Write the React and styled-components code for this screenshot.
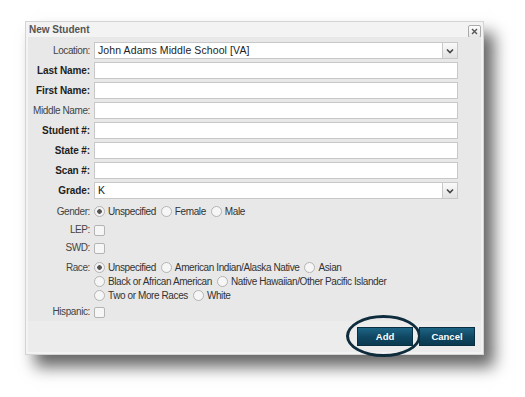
import React from "react";
import styled, { createGlobalStyle } from "styled-components";

const GlobalStyle = createGlobalStyle`
  html, body {
    margin: 0;
    padding: 0;
    background: #ffffff;
  }
  body {
    font-family: "Liberation Sans", Arial, sans-serif;
  }
`;

const Page = styled.div`
  width: 525px;
  height: 397px;
  padding: 21px 0 0 25px;
  box-sizing: border-box;
  overflow: hidden;
`;

const Dialog = styled.div`
  position: relative;
  width: 459px;
  height: 334px;
  box-sizing: border-box;
  background: #f3f3f3;
  border: 1px solid #d4d4d4;
  box-shadow: 10px 12px 15px rgba(0, 0, 0, 0.6);
  display: flex;
  flex-direction: column;
`;

const TitleBar = styled.div`
  height: 15px;
  display: flex;
  align-items: center;
  justify-content: space-between;
  padding: 0 2px 0 3px;
  font-size: 10px;
  font-weight: bold;
  color: #555;
`;

const CloseButton = styled.div`
  width: 11px;
  height: 11px;
  margin-top: 3px;
  border: 1px solid #aaa;
  border-radius: 2px;
  background: linear-gradient(#fdfdfd, #e6e6e6);
  display: flex;
  align-items: center;
  justify-content: center;
`;

const Body = styled.div`
  flex: 1;
  margin: 0 2px 2px 2px;
  background: #e8e8e8;
  display: flex;
  flex-direction: column;
`;

const Form = styled.div`
  flex: 1;
  padding: 5px 23px 0 0;
  display: grid;
  grid-template-columns: 62px 1fr;
  column-gap: 4px;
  align-content: start;
`;

const Label = styled.div`
  text-align: right;
  font-size: 10px;
  letter-spacing: ${(p) => (p.$bold ? "-0.1px" : "-0.4px")};
  color: ${(p) => (p.$bold ? "#1e1e1e" : "#444")};
  font-weight: ${(p) => (p.$bold ? "bold" : "normal")};
  height: ${(p) => p.$h || 20}px;
  line-height: ${(p) => p.$lh || 17}px;
  white-space: nowrap;
`;

const Field = styled.div`
  height: ${(p) => p.$h || 20}px;
`;

const TextInput = styled.div`
  height: 17px;
  box-sizing: border-box;
  border: 1px solid #c8c8c8;
  background: #fff;
  font-size: 10.5px;
  letter-spacing: 0.1px;
  color: #222;
  line-height: 15px;
  padding-left: 3px;
  display: flex;
  align-items: center;
  justify-content: space-between;
`;

const SelectArrow = styled.div`
  width: 14px;
  height: 15px;
  border-left: 1px solid #c8c8c8;
  background: linear-gradient(#fafafa, #e2e2e2);
  display: flex;
  align-items: center;
  justify-content: center;
`;

const Options = styled.div`
  display: flex;
  align-items: center;
  font-size: 10px;
  letter-spacing: -0.4px;
  color: #333;
  height: ${(p) => p.$lh || 17}px;
`;

const Option = styled.span`
  display: inline-flex;
  align-items: center;
  margin-right: 5px;
  white-space: nowrap;
`;

const Radio = styled.span`
  width: 9px;
  height: 9px;
  border-radius: 50%;
  border: 1px solid #b4b4b4;
  background: ${(p) =>
    p.$on
      ? "radial-gradient(circle, #555 0 2px, #f4f4f4 2.6px)"
      : "#f6f6f6"};
  margin-right: 3px;
`;

const Checkbox = styled.span`
  display: block;
  width: 9px;
  height: 9px;
  border-radius: 2px;
  border: 1px solid #b4b4b4;
  background: #f6f6f6;
  margin-top: ${(p) => p.$top || 4}px;
`;

const Footer = styled.div`
  height: 31px;
  background: #ececec;
  display: flex;
  justify-content: flex-end;
  align-items: center;
  gap: 6px;
  padding-right: 6px;
`;

const Button = styled.div`
  position: relative;
  width: 56px;
  height: 19px;
  box-sizing: border-box;
  border: 1px solid #0b2f42;
  background: linear-gradient(#1d6585, #0f4661 55%, #0b3a50);
  color: #fff;
  font-size: 9.5px;
  font-weight: bold;
  display: flex;
  align-items: center;
  justify-content: center;
`;

const Highlight = styled.div`
  position: absolute;
  left: -12px;
  top: -13px;
  width: 75px;
  height: 42px;
  border: 3px solid #0e2c3c;
  border-radius: 50%;
  box-sizing: border-box;
  pointer-events: none;
`;

const Chevron = () => (
  <svg width="8" height="6" viewBox="0 0 8 6">
    <path d="M1 1.5 L4 4.5 L7 1.5" fill="none" stroke="#444" strokeWidth="1.6" />
  </svg>
);

const inputs = [
  { label: "Last Name:", bold: true },
  { label: "First Name:", bold: true },
  { label: "Middle Name:" },
  { label: "Student #:", bold: true },
  { label: "State #:", bold: true },
  { label: "Scan #:", bold: true },
];

const raceLines = [
  [["Unspecified", true], ["American Indian/Alaska Native"], ["Asian"]],
  [["Black or African American"], ["Native Hawaiian/Other Pacific Islander"]],
  [["Two or More Races"], ["White"]],
];

export default function App() {
  return (
    <Page>
      <GlobalStyle />
      <Dialog>
        <TitleBar>
          New Student
          <CloseButton>
            <svg width="7" height="7" viewBox="0 0 7 7">
              <path d="M1 1 L6 6 M6 1 L1 6" stroke="#555" strokeWidth="1.4" />
            </svg>
          </CloseButton>
        </TitleBar>
        <Body>
          <Form>
            <Label>Location:</Label>
            <Field>
              <TextInput>
                John Adams Middle School [VA]
                <SelectArrow>
                  <Chevron />
                </SelectArrow>
              </TextInput>
            </Field>
            {inputs.map((r) => (
              <React.Fragment key={r.label}>
                <Label $bold={r.bold}>{r.label}</Label>
                <Field>
                  <TextInput />
                </Field>
              </React.Fragment>
            ))}
            <Label $bold>Grade:</Label>
            <Field>
              <TextInput>
                K
                <SelectArrow>
                  <Chevron />
                </SelectArrow>
              </TextInput>
            </Field>

            <Label $h={19} $lh={19}>Gender:</Label>
            <Field $h={19}>
              <Options $lh={19}>
                <Option><Radio $on />Unspecified</Option>
                <Option><Radio />Female</Option>
                <Option><Radio />Male</Option>
              </Options>
            </Field>

            <Label $h={17}>LEP:</Label>
            <Field $h={17}>
              <Checkbox />
            </Field>

            <Label $h={19} $lh={19}>SWD:</Label>
            <Field $h={19}>
              <Checkbox $top={5} />
            </Field>

            <Label $h={46} $lh={21}>Race:</Label>
            <Field $h={46}>
              <div style={{ paddingTop: 3 }}>
                {raceLines.map((line, i) => (
                  <Options key={i} $lh={14}>
                    {line.map(([text, on]) => (
                      <Option key={text}>
                        <Radio $on={on} />
                        {text}
                      </Option>
                    ))}
                  </Options>
                ))}
              </div>
            </Field>

            <Label $h={17}>Hispanic:</Label>
            <Field $h={17}>
              <Checkbox />
            </Field>
          </Form>
          <Footer>
            <Button>
              Add
              <Highlight />
            </Button>
            <Button>Cancel</Button>
          </Footer>
        </Body>
      </Dialog>
    </Page>
  );
}
